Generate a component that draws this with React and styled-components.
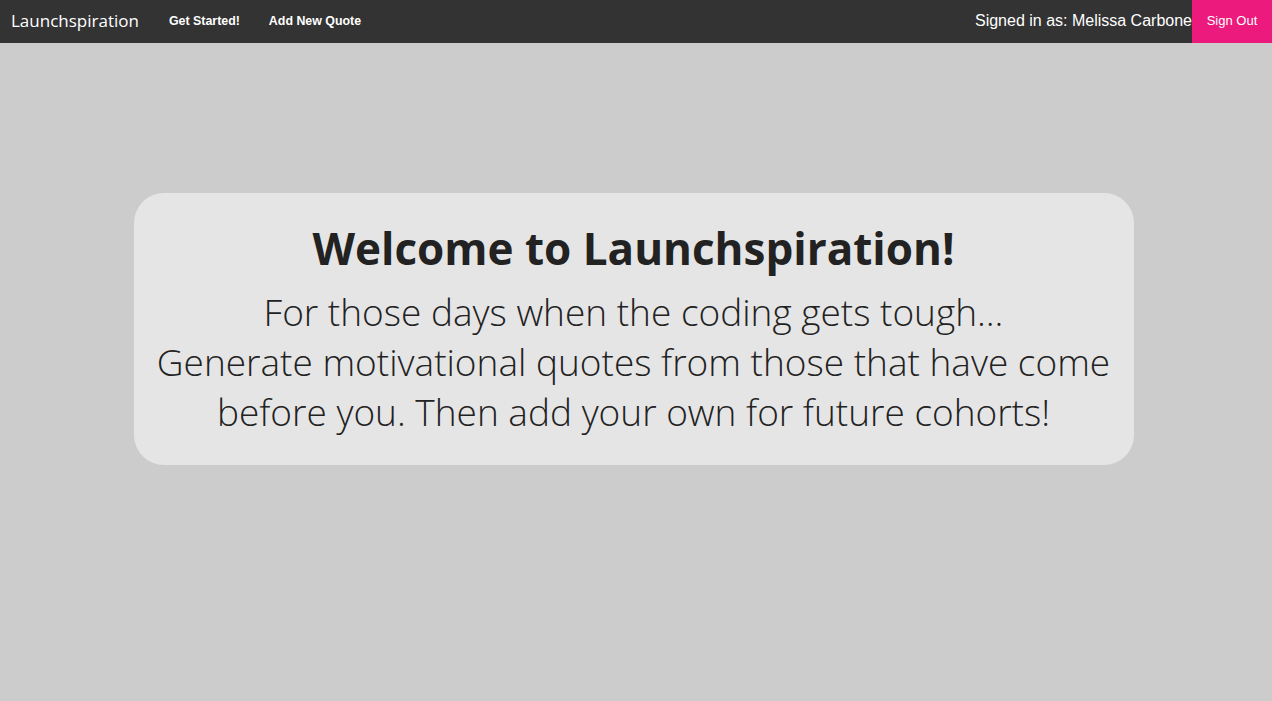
import React from "react";
import styled, { createGlobalStyle } from "styled-components";

const Global = createGlobalStyle`
  html, body { margin: 0; padding: 0; background: #cccccc; }
  body { font-family: "Open Sans", "Liberation Sans", sans-serif; }
  * { box-sizing: border-box; }
`;

const Page = styled.div`
  min-height: 701px;
  background: #cccccc;
  display: flex;
  flex-direction: column;
`;

const TopBar = styled.nav`
  height: 43px;
  background: #333333;
  display: flex;
  align-items: stretch;
  justify-content: space-between;
`;

const Left = styled.div`
  display: flex;
  align-items: center;
  padding-left: 11px;
  padding-bottom: 2px;
`;

const Brand = styled.a`
  font-family: "Open Sans", sans-serif;
  font-size: 17px;
  color: #ffffff;
  text-decoration: none;
  margin-right: 30px;
`;

const NavLink = styled.a`
  font-family: "Liberation Sans", Arial, sans-serif;
  font-weight: bold;
  font-size: 12.4px;
  color: #ffffff;
  text-decoration: none;
  margin-right: 29px;
`;

const Right = styled.div`
  display: flex;
  align-items: stretch;
`;

const SignedIn = styled.span`
  font-family: "Liberation Sans", Arial, sans-serif;
  font-size: 16px;
  color: #ffffff;
  display: flex;
  align-items: center;
  padding-bottom: 2px;
`;

const SignOut = styled.button`
  border: none;
  background: #ec1a7c;
  color: #ffffff;
  font-family: "Liberation Sans", Arial, sans-serif;
  font-size: 13px;
  width: 80px;
  padding: 0 0 2px;
  cursor: pointer;
`;

const Main = styled.main`
  display: flex;
  justify-content: center;
  padding-top: 150px;
  padding-right: 5px;
`;

const Card = styled.section`
  width: 1000px;
  background: #e5e5e5;
  border-radius: 30px;
  padding: 24px 10px 28px;
  text-align: center;
  color: #222222;
`;

const Title = styled.h1`
  margin: 0 0 8px;
  font-family: "Open Sans", sans-serif;
  font-weight: 700;
  font-size: 44px;
  line-height: 62px;
`;

const Lead = styled.p`
  margin: 0;
  font-family: "Open Sans", sans-serif;
  font-weight: 300;
  font-size: 37px;
  line-height: 50px;
`;

export default function App() {
  return (
    <>
      <Global />
      <Page>
        <TopBar>
          <Left>
            <Brand href="#">Launchspiration</Brand>
            <NavLink href="#">Get Started!</NavLink>
            <NavLink href="#">Add New Quote</NavLink>
          </Left>
          <Right>
            <SignedIn>Signed in as: Melissa Carbone</SignedIn>
            <SignOut>Sign Out</SignOut>
          </Right>
        </TopBar>
        <Main>
          <Card>
            <Title>Welcome to Launchspiration!</Title>
            <Lead>
              For those days when the coding gets tough...
              <br />
              Generate motivational quotes from those that have come before
              you. Then add your own for future cohorts!
            </Lead>
          </Card>
        </Main>
      </Page>
    </>
  );
}
